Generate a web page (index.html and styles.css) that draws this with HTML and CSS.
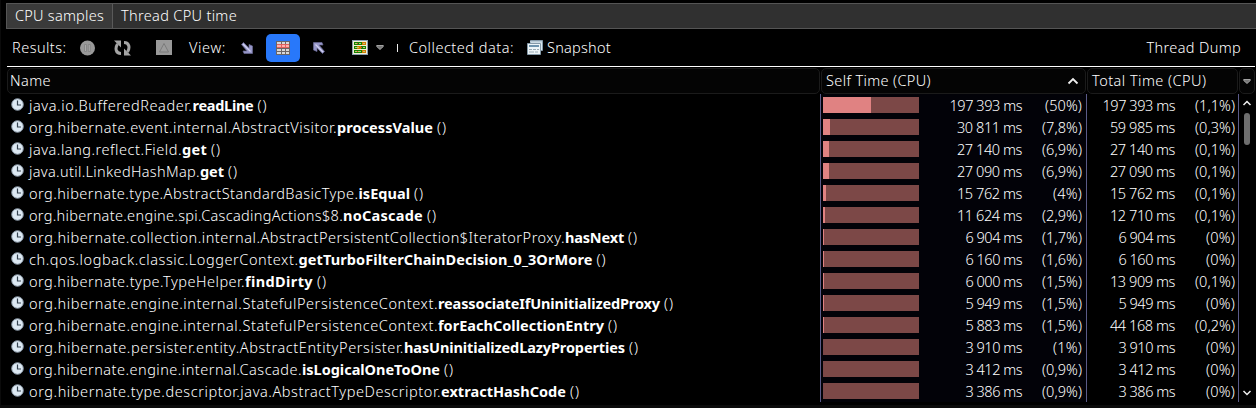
FILE: index.html
```html
<!DOCTYPE html>
<html lang="en">
<head>
<meta charset="utf-8">
<title>CPU samples</title>
<link rel="stylesheet" href="styles.css">
</head>
<body>
<div class="window">
  <nav class="tabs">
    <div class="tab active"><span data-w="89">CPU samples</span></div>
    <div class="tab"><span data-w="116">Thread CPU time</span></div>
  </nav>
  <div class="toolbar">
    <span class="results" data-w="54.500">Results:</span>
    <svg class="pause" width="16" height="16"><circle cx="7.500" cy="8" r="7.500" fill="#999"/><path d="M4.500 4.500h2v7h-2zM8.300 4.500h2v7h-2z" fill="#aaa" stroke="#808080" stroke-width=".8"/></svg>
    <svg class="refresh" width="17" height="16" fill="none" stroke="#a5a5a5" stroke-width="3"><path d="M7 13.500C1.500 13.500 1 8 3.500 4M10 2.500C15.500 2.500 16 8 13.500 12"/><path d="M0 .5h7v7zM17 15.500h-7v-7z" fill="#a5a5a5" stroke="none"/></svg>
    <svg class="delta" width="16" height="15"><path d="M0 0h16v15H0z" fill="#999"/><path d="M8 3.500L12.500 12h-9z" fill="#9c9c9c" stroke="#7b7b7b"/></svg>
    <span class="view" data-w="37">View:</span>
    <svg class="down" width="12" height="12"><path d="M.5 2.500L2.500.5L8 6V2.500L11.500 4V11.500H3L2 9H6z" fill="#9696c8" stroke="#6a6a94" stroke-width=".7"/><path d="M2 2L9.500 9.500" stroke="#d0d0ef" stroke-width="1.300"/></svg>
    <div class="toggle"><svg width="14" height="14" shape-rendering="crispEdges"><path d="M0 0h14v14H0z" fill="#6b6565"/><path d="M1 1h4v2H1zM6 1h3v2H6zM10 1h3v2h-3zM1 8h4v2H1zM6 8h3v2H6zM10 8h3v2h-3zM1 11h4v2H1zM6 11h3v2H6zM10 11h3v2h-3z" fill="#d8d8d8"/><path d="M1 3h12v4H1z" fill="#e0605c"/><path d="M1 4h4v2H1zM6 4h3v2H6zM10 4h3v2h-3z" fill="#ffb0aa"/></svg></div>
    <svg class="up" width="12" height="12"><path d="M11.500 9.500L9.500 11.500L4 6V9.500L.5 8V.5H9L10 3H6z" fill="#9696c8" stroke="#6a6a94" stroke-width=".7"/><path d="M10 10L2.500 2.500" stroke="#d0d0ef" stroke-width="1.300"/></svg>
    <svg class="threads" width="16" height="15" shape-rendering="crispEdges"><path d="M0 0h16v15H0z" fill="#8ba0b0"/><path d="M1 1h14v13H1z" fill="#f4efd5"/><path d="M2 2h12v3H2zM2 6h12v3H2zM2 10h12v3H2z" fill="#168000"/><path d="M10 2h4v3h-4zM5 6h4v3H5zM10 10h4v3h-4z" fill="#d57a00"/><path d="M3 3h2v1H3zM7 3h2v1H7zM11 3h2v1h-2zM3 7h4v1H3zM11 7h2v1h-2zM3 11h2v1H3zM6 11h3v1H6zM11 11h2v1h-2z" fill="#b5d36e"/><path d="M5 3h1v1H5zM9 7h1v1H9zM5 11h1v1H5z" fill="#e33"/></svg>
    <svg class="caret" width="8" height="5"><path d="M.7 .5h6.600v1L4 4.500.7 1.500z" fill="#777" stroke="#bbb" stroke-width=".8"/></svg>
    <i class="sep"></i>
    <span class="collected" data-w="105">Collected data:</span>
    <svg class="snap" width="16" height="15"><path d="M3.500.5h12v10h-12z" fill="#dce9f0" stroke="#8499a8"/><path d="M3 1h12v1.500H3z" fill="#b9cbd7"/><path d="M.5 3.500h13v11H.5z" fill="#edf5f8" stroke="#8499a8"/><path d="M2 5h10v2H2z" fill="#6e94ae"/><path d="M2 9.500h3m1 0h3m1 0h2M2 12h5m1 0h3" stroke="#9aabb5"/></svg>
    <span class="snapshot" data-w="64">Snapshot</span>
    <span class="dump" data-w="94.500">Thread Dump</span>
  </div>
  <div class="table">
    <header class="head">
      <div class="th"><span data-w="41">Name</span></div>
      <div class="th"><span data-w="105">Self Time (CPU)</span><svg width="12" height="8"><path d="M1.500 6.500L6 2l4.500 4.500" fill="none" stroke="#eee" stroke-width="1.800"/></svg></div>
      <div class="th"><span data-w="114.500">Total Time (CPU)</span></div>
      <div class="th menu"><svg width="8" height="5"><path d="M.7 .5h6.600v1L4 4.500.7 1.500z" fill="#777" stroke="#bbb" stroke-width=".8"/></svg></div>
    </header>
    <div class="content">
      <div class="rows" id="rows"></div>
      <div class="scroll">
        <svg width="10" height="6"><path d="M1.500 5L5 1.500 8.500 5" fill="none" stroke="#eee" stroke-width="1.500"/></svg>
        <i class="thumb"></i>
        <svg class="last" width="10" height="6"><path d="M1.500 1L5 4.500 8.500 1" fill="none" stroke="#eee" stroke-width="1.500"/></svg>
      </div>
    </div>
  </div>
  <div class="edge"></div>
</div>
<script src="app.js"></script>
</body>
</html>
```
FILE: styles.css
```css
* { box-sizing: border-box; }
body { margin: 0; background: #000; overflow: hidden; }
.window {
  width: 1256px; height: 408px; padding: 3px 0 0 5px;
  display: flex; flex-direction: column;
  border-left: 1px solid #0b0b0b;
  font: 300 14.5px/22px "Noto Sans", sans-serif; color: #fff;
}
svg { display: block; flex: none; }
span { display: block; flex: none; white-space: pre; }
.tabs { display: flex; flex: none; height: 26px; background: #303030; border: 1px solid #555; border-right: 0; }
.tab { display: flex; padding: 0 8px; }
.tab.active { width: 106px; background: #3a3a3a; border-right: 1px solid #5a5a5a; }
.toolbar { display: flex; flex: none; align-items: center; height: 37px; padding: 0 15px 0 6px; }
.toolbar span { padding-bottom: 2px; }
.pause { margin-left: 13.5px; }
.refresh { margin-left: 18px; }
.delta { margin-left: 25px; }
.view { margin-left: 17px; }
.down { margin-left: 15px; }
.toggle { display: flex; align-items: center; justify-content: center; width: 34px; height: 28px; margin-left: 13px; border-radius: 5px; background: #2878fa; }
.up { margin-left: 13px; }
.threads { margin-left: 27px; }
.caret { margin-left: 8px; }
.sep { width: 1px; height: 8px; margin-left: 13px; background: #eee; }
.collected { margin-left: 11px; }
.snap { margin-left: 13px; }
.snapshot { margin-left: 4px; }
.dump { margin-left: auto; }
.table { flex: none; width: 1248px; margin-left: 1px; border-top: 1px solid #fff; padding-top: 1px; }
.head { display: grid; grid-template-columns: 813px 265px 151px 16px; column-gap: 1px; height: 26px; }
.th { display: flex; justify-content: space-between; align-items: center; padding: 0 6px 0 4px; border: 1px solid #1b1b1b; border-radius: 5px; background: #040404; }
.th span { padding-bottom: 2px; }
.th:first-child { padding-left: 2px; }
.th.menu { padding: 0; justify-content: center; }
.content { display: flex; height: 308px; overflow: hidden; }
.rows { width: 1232px; }
.row { display: grid; grid-template-columns: 813px 266px 153px; height: 22px; }
.name { display: flex; padding-left: 4px; }
.clock { margin: 4px 5px 0 0; }
.name b { display: block; flex: none; font-weight: 700; }
.args { margin-left: 4px; }
.cell { display: flex; justify-content: flex-end; border-left: 1px solid #5b5b88; padding-right: 4px; }
.self { background: #020208; }
.total { border-right: 1px solid #5b5b88; padding-right: 3px; }
.bar { width: 96px; height: 16px; margin: 3px auto 0 2px; background: #7c4847; }
.fill { height: 16px; background: #e08282; }
.pct { display: flex; justify-content: flex-end; width: 60px; }
.scroll { display: flex; flex-direction: column; align-items: center; width: 16px; height: 308px; padding: 6px 0 6px; }
.thumb { width: 6px; height: 32px; margin-top: 7px; border-radius: 3px; background: #6e6e6e; }
.last { margin-top: auto; }
.edge { height: 3px; margin: auto 0 0 -5px; background: #0b0b0b; }
```
FILE: app.js
```js
// [package and class, method, class width, method width, self ms, self %, total ms, total %, bar width]
const data = [
  ['java.io.BufferedReader.', 'readLine', 163.5, 61, '197 393', '50', '197 393', '1,1', 48],
  ['org.hibernate.event.internal.AbstractVisitor.', 'processValue', 308, 96, '30 811', '7,8', '59 985', '0,3', 7],
  ['java.lang.reflect.Field.', 'get', 153, 25, '27 140', '6,9', '27 140', '0,1', 6],
  ['java.util.LinkedHashMap.', 'get', 171, 24, '27 090', '6,9', '27 090', '0,1', 6],
  ['org.hibernate.type.AbstractStandardBasicType.', 'isEqual', 329.5, 51.5, '15 762', '4', '15 762', '0,1', 3],
  ['org.hibernate.engine.spi.CascadingActions$8.', 'noCascade', 314, 80, '11 624', '2,9', '12 710', '0,1', 2],
  ['org.hibernate.collection.internal.AbstractPersistentCollection$IteratorProxy.', 'hasNext', 536, 59, '6 904', '1,7', '6 904', '0', 1],
  ['ch.qos.logback.classic.LoggerContext.', 'getTurboFilterChainDecision_0_3OrMore', 269.5, 294, '6 160', '1,6', '6 160', '0', 1],
  ['org.hibernate.type.TypeHelper.', 'findDirty', 216, 68, '6 000', '1,5', '13 909', '0,1', 1],
  ['org.hibernate.engine.internal.StatefulPersistenceContext.', 'reassociateIfUninitializedProxy', 409, 222, '5 949', '1,5', '5 949', '0', 1],
  ['org.hibernate.engine.internal.StatefulPersistenceContext.', 'forEachCollectionEntry', 409, 166, '5 883', '1,5', '44 168', '0,2', 1],
  ['org.hibernate.persister.entity.AbstractEntityPersister.', 'hasUninitializedLazyProperties', 375, 221, '3 910', '1', '3 910', '0', 0],
  ['org.hibernate.engine.internal.Cascade.', 'isLogicalOneToOne', 273, 138, '3 412', '0,9', '3 412', '0', 0],
  ['org.hibernate.type.descriptor.java.AbstractTypeDescriptor.', 'extractHashCode', 412, 125, '3 386', '0,9', '3 386', '0', 0]
];
const clock = '<svg class="clock" width="13" height="13"><circle cx="6.500" cy="6.500" r="5.800" fill="#dde9f3" stroke="#8795a3" stroke-width="1"/><path d="M6.500 2.500V7h3.500" fill="none" stroke="#34424f" stroke-width="1.200"/></svg>';
const msWidth = { 5: 56.5, 6: 65, 7: 72.5 };
const pctWidth = { 1: 29, 2: 37, 3: 40 };
const time = (v, p) =>
  `<span data-w="${msWidth[v.length]}">${v} ms</span><div class="pct"><span data-w="${pctWidth[p.length]}">(${p}%)</span></div>`;
document.getElementById('rows').innerHTML = data.map(([cls, fn, cw, fw, self, sp, total, tp, bar]) =>
  `<div class="row"><div class="name">${clock}<span data-w="${cw}">${cls}</span><b data-w="${fw}">${fn}</b><span class="args" data-w="10">()</span></div>` +
  `<div class="cell self"><div class="bar"><div class="fill" style="width:${bar}px"></div></div>${time(self, sp)}</div>` +
  `<div class="cell total">${time(total, tp)}</div></div>`).join('');

document.querySelectorAll('[data-w]').forEach(el => {
  const w = parseFloat(el.dataset.w);
  el.style.letterSpacing = (w - el.getBoundingClientRect().width) / el.textContent.length + 'px';
});
```
